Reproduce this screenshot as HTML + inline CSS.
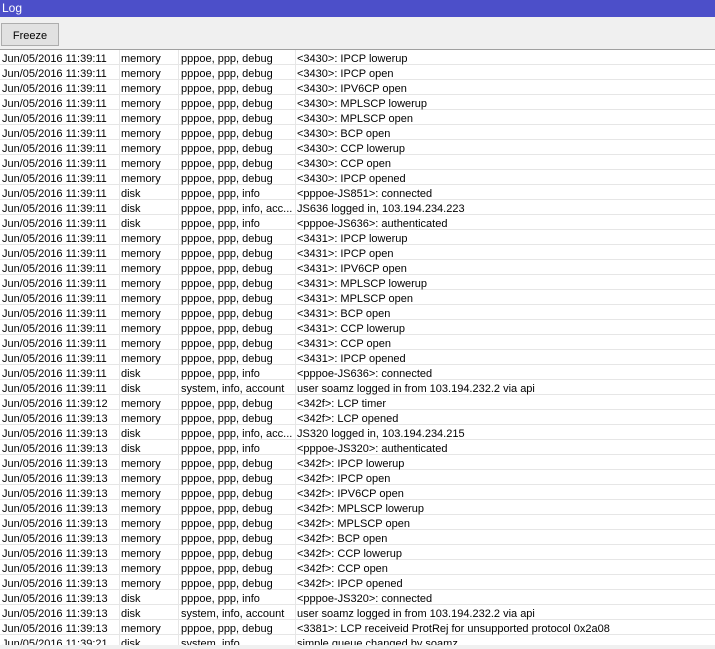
<!DOCTYPE html>
<html><head><meta charset="utf-8"><style>
*{margin:0;padding:0;box-sizing:border-box}
body{width:715px;height:649px;overflow:hidden;background:#f0f0f0;font-family:"Liberation Sans",Arial,sans-serif;font-size:11px;color:#000;position:relative}
#title{position:absolute;left:0;top:0;width:715px;height:17px;background:#4c4fc9;color:#fff;font-size:12px;line-height:17px;padding-left:2px}
#tb{position:absolute;left:0;top:17px;width:715px;height:33px;background:#f0f0f0;border-bottom:1px solid #a0a0a0}
#btn{position:absolute;left:1px;top:6px;width:58px;height:23px;border:1px solid #adadad;background:#e1e1e1;text-align:center;line-height:24px;font-size:11px}
#list{position:absolute;left:0;top:50px;width:715px;height:595px;background:#fff;overflow:hidden}
.r{height:15px;line-height:14px;border-bottom:1px solid #e6e6e6;white-space:nowrap;position:relative}
.r span{position:absolute;top:2px}
.a{left:2px}.b{left:121px}.c{left:181px}.d{left:297px}
.v{position:absolute;top:50px;width:1px;height:595px;background:#e6e6e6}
#bot{position:absolute;left:0;top:645px;width:715px;height:4px;background:#f0f0f0}
</style></head><body>
<div id="title">Log</div>
<div id="tb"><div id="btn">Freeze</div></div>
<div id="list">
<div class="r"><span class="a">Jun/05/2016 11:39:11</span><span class="b">memory</span><span class="c">pppoe, ppp, debug</span><span class="d">&lt;3430&gt;: IPCP lowerup</span></div>
<div class="r"><span class="a">Jun/05/2016 11:39:11</span><span class="b">memory</span><span class="c">pppoe, ppp, debug</span><span class="d">&lt;3430&gt;: IPCP open</span></div>
<div class="r"><span class="a">Jun/05/2016 11:39:11</span><span class="b">memory</span><span class="c">pppoe, ppp, debug</span><span class="d">&lt;3430&gt;: IPV6CP open</span></div>
<div class="r"><span class="a">Jun/05/2016 11:39:11</span><span class="b">memory</span><span class="c">pppoe, ppp, debug</span><span class="d">&lt;3430&gt;: MPLSCP lowerup</span></div>
<div class="r"><span class="a">Jun/05/2016 11:39:11</span><span class="b">memory</span><span class="c">pppoe, ppp, debug</span><span class="d">&lt;3430&gt;: MPLSCP open</span></div>
<div class="r"><span class="a">Jun/05/2016 11:39:11</span><span class="b">memory</span><span class="c">pppoe, ppp, debug</span><span class="d">&lt;3430&gt;: BCP open</span></div>
<div class="r"><span class="a">Jun/05/2016 11:39:11</span><span class="b">memory</span><span class="c">pppoe, ppp, debug</span><span class="d">&lt;3430&gt;: CCP lowerup</span></div>
<div class="r"><span class="a">Jun/05/2016 11:39:11</span><span class="b">memory</span><span class="c">pppoe, ppp, debug</span><span class="d">&lt;3430&gt;: CCP open</span></div>
<div class="r"><span class="a">Jun/05/2016 11:39:11</span><span class="b">memory</span><span class="c">pppoe, ppp, debug</span><span class="d">&lt;3430&gt;: IPCP opened</span></div>
<div class="r"><span class="a">Jun/05/2016 11:39:11</span><span class="b">disk</span><span class="c">pppoe, ppp, info</span><span class="d">&lt;pppoe-JS851&gt;: connected</span></div>
<div class="r"><span class="a">Jun/05/2016 11:39:11</span><span class="b">disk</span><span class="c">pppoe, ppp, info, acc...</span><span class="d">JS636 logged in, 103.194.234.223</span></div>
<div class="r"><span class="a">Jun/05/2016 11:39:11</span><span class="b">disk</span><span class="c">pppoe, ppp, info</span><span class="d">&lt;pppoe-JS636&gt;: authenticated</span></div>
<div class="r"><span class="a">Jun/05/2016 11:39:11</span><span class="b">memory</span><span class="c">pppoe, ppp, debug</span><span class="d">&lt;3431&gt;: IPCP lowerup</span></div>
<div class="r"><span class="a">Jun/05/2016 11:39:11</span><span class="b">memory</span><span class="c">pppoe, ppp, debug</span><span class="d">&lt;3431&gt;: IPCP open</span></div>
<div class="r"><span class="a">Jun/05/2016 11:39:11</span><span class="b">memory</span><span class="c">pppoe, ppp, debug</span><span class="d">&lt;3431&gt;: IPV6CP open</span></div>
<div class="r"><span class="a">Jun/05/2016 11:39:11</span><span class="b">memory</span><span class="c">pppoe, ppp, debug</span><span class="d">&lt;3431&gt;: MPLSCP lowerup</span></div>
<div class="r"><span class="a">Jun/05/2016 11:39:11</span><span class="b">memory</span><span class="c">pppoe, ppp, debug</span><span class="d">&lt;3431&gt;: MPLSCP open</span></div>
<div class="r"><span class="a">Jun/05/2016 11:39:11</span><span class="b">memory</span><span class="c">pppoe, ppp, debug</span><span class="d">&lt;3431&gt;: BCP open</span></div>
<div class="r"><span class="a">Jun/05/2016 11:39:11</span><span class="b">memory</span><span class="c">pppoe, ppp, debug</span><span class="d">&lt;3431&gt;: CCP lowerup</span></div>
<div class="r"><span class="a">Jun/05/2016 11:39:11</span><span class="b">memory</span><span class="c">pppoe, ppp, debug</span><span class="d">&lt;3431&gt;: CCP open</span></div>
<div class="r"><span class="a">Jun/05/2016 11:39:11</span><span class="b">memory</span><span class="c">pppoe, ppp, debug</span><span class="d">&lt;3431&gt;: IPCP opened</span></div>
<div class="r"><span class="a">Jun/05/2016 11:39:11</span><span class="b">disk</span><span class="c">pppoe, ppp, info</span><span class="d">&lt;pppoe-JS636&gt;: connected</span></div>
<div class="r"><span class="a">Jun/05/2016 11:39:11</span><span class="b">disk</span><span class="c">system, info, account</span><span class="d">user soamz logged in from 103.194.232.2 via api</span></div>
<div class="r"><span class="a">Jun/05/2016 11:39:12</span><span class="b">memory</span><span class="c">pppoe, ppp, debug</span><span class="d">&lt;342f&gt;: LCP timer</span></div>
<div class="r"><span class="a">Jun/05/2016 11:39:13</span><span class="b">memory</span><span class="c">pppoe, ppp, debug</span><span class="d">&lt;342f&gt;: LCP opened</span></div>
<div class="r"><span class="a">Jun/05/2016 11:39:13</span><span class="b">disk</span><span class="c">pppoe, ppp, info, acc...</span><span class="d">JS320 logged in, 103.194.234.215</span></div>
<div class="r"><span class="a">Jun/05/2016 11:39:13</span><span class="b">disk</span><span class="c">pppoe, ppp, info</span><span class="d">&lt;pppoe-JS320&gt;: authenticated</span></div>
<div class="r"><span class="a">Jun/05/2016 11:39:13</span><span class="b">memory</span><span class="c">pppoe, ppp, debug</span><span class="d">&lt;342f&gt;: IPCP lowerup</span></div>
<div class="r"><span class="a">Jun/05/2016 11:39:13</span><span class="b">memory</span><span class="c">pppoe, ppp, debug</span><span class="d">&lt;342f&gt;: IPCP open</span></div>
<div class="r"><span class="a">Jun/05/2016 11:39:13</span><span class="b">memory</span><span class="c">pppoe, ppp, debug</span><span class="d">&lt;342f&gt;: IPV6CP open</span></div>
<div class="r"><span class="a">Jun/05/2016 11:39:13</span><span class="b">memory</span><span class="c">pppoe, ppp, debug</span><span class="d">&lt;342f&gt;: MPLSCP lowerup</span></div>
<div class="r"><span class="a">Jun/05/2016 11:39:13</span><span class="b">memory</span><span class="c">pppoe, ppp, debug</span><span class="d">&lt;342f&gt;: MPLSCP open</span></div>
<div class="r"><span class="a">Jun/05/2016 11:39:13</span><span class="b">memory</span><span class="c">pppoe, ppp, debug</span><span class="d">&lt;342f&gt;: BCP open</span></div>
<div class="r"><span class="a">Jun/05/2016 11:39:13</span><span class="b">memory</span><span class="c">pppoe, ppp, debug</span><span class="d">&lt;342f&gt;: CCP lowerup</span></div>
<div class="r"><span class="a">Jun/05/2016 11:39:13</span><span class="b">memory</span><span class="c">pppoe, ppp, debug</span><span class="d">&lt;342f&gt;: CCP open</span></div>
<div class="r"><span class="a">Jun/05/2016 11:39:13</span><span class="b">memory</span><span class="c">pppoe, ppp, debug</span><span class="d">&lt;342f&gt;: IPCP opened</span></div>
<div class="r"><span class="a">Jun/05/2016 11:39:13</span><span class="b">disk</span><span class="c">pppoe, ppp, info</span><span class="d">&lt;pppoe-JS320&gt;: connected</span></div>
<div class="r"><span class="a">Jun/05/2016 11:39:13</span><span class="b">disk</span><span class="c">system, info, account</span><span class="d">user soamz logged in from 103.194.232.2 via api</span></div>
<div class="r"><span class="a">Jun/05/2016 11:39:13</span><span class="b">memory</span><span class="c">pppoe, ppp, debug</span><span class="d">&lt;3381&gt;: LCP receiveid ProtRej for unsupported protocol 0x2a08</span></div>
<div class="r"><span class="a">Jun/05/2016 11:39:21</span><span class="b">disk</span><span class="c">system, info</span><span class="d">simple queue changed by soamz</span></div>
</div>
<div class="v" style="left:119px"></div>
<div class="v" style="left:178px"></div>
<div class="v" style="left:295px"></div>
<div id="bot"></div>
</body></html>
